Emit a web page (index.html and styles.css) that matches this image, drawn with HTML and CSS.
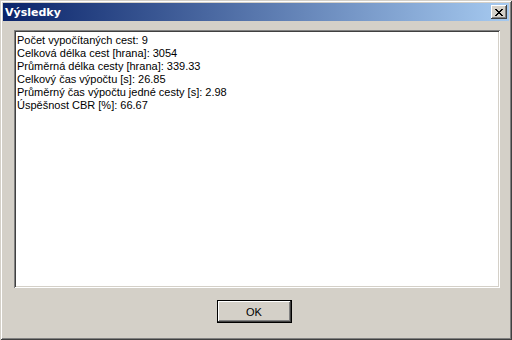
FILE: index.html
```html
<!DOCTYPE html>
<html lang="cs">
<head>
  <meta charset="UTF-8">
  <title>Výsledky</title>
  <link rel="stylesheet" href="styles.css">
</head>
<body>
  <div class="okno">
    <div class="titulek">
      <span class="nazev">Výsledky</span>
      <button class="zavrit" title="Zavřít">
        <svg width="8" height="7" viewBox="0 0 8 7">
          <path d="M0 0h2v1h1v1h2V1h1V0h2v1H7v1H6v1H5v1h1v1h1v1h1v1H6V6H5V5H3v1H2v1H0V6h1V5h1V4h1V3H2V2H1V1H0z" fill="#000"/>
        </svg>
      </button>
    </div>
    <div class="obsah">
      <div class="vysledky">
        <div>Počet vypočítaných cest: 9</div>
        <div>Celková délka cest [hrana]: 3054</div>
        <div>Průměrná délka cesty [hrana]: 339.33</div>
        <div>Celkový čas výpočtu [s]: 26.85</div>
        <div>Průměrný čas výpočtu jedné cesty [s]: 2.98</div>
        <div>Úspěšnost CBR [%]: 66.67</div>
      </div>
      <div class="tlacitka">
        <button class="ok">OK</button>
      </div>
    </div>
  </div>
</body>
</html>
```
FILE: styles.css
```css
body {
  margin: 0;
  background: #d4d0c8;
  font-family: "Liberation Sans", Arial, sans-serif;
  font-size: 11px;
}

.okno {
  width: 512px;
  height: 340px;
  box-sizing: border-box;
  padding: 3px;
  background: #d4d0c8;
  box-shadow: inset 1px 1px 0 #d4d0c8, inset -1px -1px 0 #404040,
              inset 2px 2px 0 #fff, inset -2px -2px 0 #808080;
  display: flex;
  flex-direction: column;
}

.titulek {
  height: 18px;
  background: linear-gradient(to right, #0a246a, #a6caf0);
  display: flex;
  align-items: center;
  justify-content: space-between;
  padding: 0 2px 0 2px;
}

.nazev {
  color: #fff;
  font-family: "DejaVu Sans", Verdana, sans-serif;
  font-weight: bold;
  font-size: 11px;
}

.zavrit {
  width: 16px;
  height: 14px;
  padding: 0;
  border: none;
  background: #d4d0c8;
  box-shadow: inset -1px -1px 0 #404040, inset 1px 1px 0 #fff,
              inset -2px -2px 0 #808080;
  display: flex;
  align-items: center;
  justify-content: center;
}

.obsah {
  flex: 1;
  display: flex;
  flex-direction: column;
  padding: 9px 9px 0 11px;
}

.vysledky {
  height: 258px;
  box-sizing: border-box;
  background: #fff;
  color: #000;
  padding: 4px 3px;
  line-height: 13px;
  font-size: 11px;
  box-shadow: inset 1px 1px 0 #808080, inset -1px -1px 0 #fff,
              inset 2px 2px 0 #404040, inset -2px -2px 0 #d4d0c8;
}

.tlacitka {
  display: flex;
  justify-content: center;
  padding-top: 12px;
  padding-right: 6px;
}

.ok {
  width: 75px;
  height: 23px;
  padding: 0;
  border: 1px solid #000;
  background: #d4d0c8;
  font-family: "Liberation Sans", Arial, sans-serif;
  font-size: 11px;
  color: #000;
  box-shadow: inset -1px -1px 0 #404040, inset 1px 1px 0 #fff,
              inset -2px -2px 0 #808080;
}
```
